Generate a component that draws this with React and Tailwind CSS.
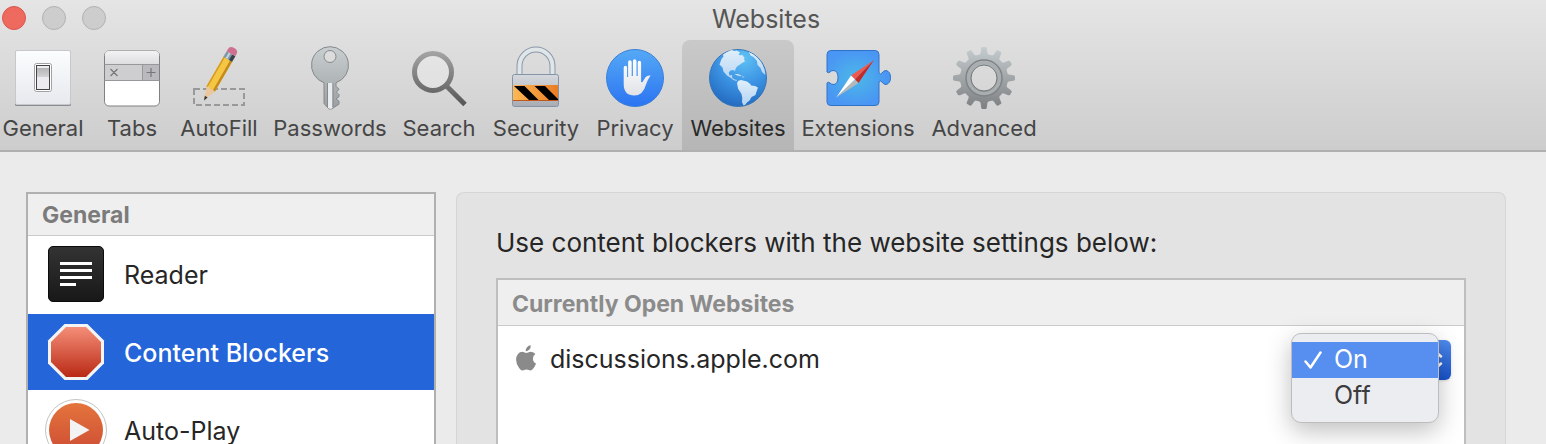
import React, { useState } from 'react';
import clsx from 'clsx';

const toolbarItems = [
  { id: 'general',    label: 'General',    width: 'w-[98px]',  icon: GeneralIcon },
  { id: 'tabs',       label: 'Tabs',       width: 'w-[80px]',  icon: TabsIcon },
  { id: 'autofill',   label: 'AutoFill',   width: 'w-[94px]',  icon: AutoFillIcon },
  { id: 'passwords',  label: 'Passwords',  width: 'w-[128px]', icon: PasswordsIcon },
  { id: 'search',     label: 'Search',     width: 'w-[90px]',  icon: SearchIcon },
  { id: 'security',   label: 'Security',   width: 'w-[104px]', icon: SecurityIcon },
  { id: 'privacy',    label: 'Privacy',    width: 'w-[94px]',  icon: PrivacyIcon },
  { id: 'websites',   label: 'Websites',   width: 'w-[112px]', icon: WebsitesIcon },
  { id: 'extensions', label: 'Extensions', width: 'w-[128px]', icon: ExtensionsIcon },
  { id: 'advanced',   label: 'Advanced',   width: 'w-[124px]', icon: AdvancedIcon },
];

const sections = [
  { id: 'reader',   label: 'Reader',           icon: ReaderIcon },
  { id: 'blockers', label: 'Content Blockers', icon: StopIcon },
  { id: 'autoplay', label: 'Auto-Play',        icon: PlayIcon },
];

const options = ['On', 'Off'];

function Gradient({ id, from, to, x2 = 0, y2 = 1 }) {
  return (
    <linearGradient id={id} x1="0" y1="0" x2={x2} y2={y2}>
      <stop offset="0" stopColor={from} />
      <stop offset="1" stopColor={to} />
    </linearGradient>
  );
}

function Icon({ children }) {
  return (
    <svg viewBox="0 0 64 64" className="h-16 w-16 shrink-0 overflow-visible" aria-hidden="true">
      {children}
    </svg>
  );
}

function GeneralIcon() {
  return (
    <Icon>
      <defs>
        <Gradient id="plate" from="#fcfdfe" to="#e8e9ee" />
        <Gradient id="knob" from="#b4b4b6" to="#d2d2d4" />
      </defs>
      <rect x="4" y="5" width="56" height="55" rx="1.5" fill="#8b8d92" />
      <rect x="4.5" y="4.5" width="55" height="54" rx="1.5" fill="url(#plate)" stroke="#c6c8cc" />
      <rect x="23.5" y="17.5" width="17" height="28" rx="2" fill="#fff" stroke="#a2a2a4" />
      <rect x="25.5" y="19.5" width="13" height="24" fill="#ececf0" stroke="#444" />
      <rect x="26" y="22" width="12" height="9" fill="url(#knob)" />
    </Icon>
  );
}

function TabsIcon() {
  return (
    <Icon>
      <defs>
        <Gradient id="tabTop" from="#f2f1f3" to="#dddcde" />
      </defs>
      <rect x="4.5" y="5" width="55" height="55" rx="4.5" fill="#fff" stroke="#808080" />
      <path d="M5 18.500V9q0-4 4-4h46q4 0 4 4v9.500z" fill="url(#tabTop)" />
      <rect x="5" y="18.500" width="54" height="16" fill="#cecdd0" />
      <rect x="42" y="18.500" width="17" height="16" fill="#bab9bd" />
      <path d="M4.500 18.500h55M4.500 34.500h55M42.500 18.500v16" stroke="#98979b" fill="none" />
      <path d="M10.500 23l7 7m0-7l-7 7M46.500 26.500h9M51 22v9" stroke="#77767a" strokeWidth="1.200" fill="none" />
    </Icon>
  );
}

function AutoFillIcon() {
  return (
    <Icon>
      <rect x="7" y="43" width="50" height="16" fill="none" stroke="#999" strokeWidth="2" strokeDasharray="6 3" />
      <g transform="translate(17 54.500) rotate(30)">
        <path d="M0 0L-5-14H5z" fill="#eac79c" />
        <path d="M0 0l-1.600-4.500h3.200z" fill="#333" />
        <path d="M-5-13V-48H5v35l-2-1.500-3 1.500-3-1.500z" fill="#f5c642" />
        <path d="M2.500-14V-48H5v35z" fill="#c48a1c" />
        <path d="M-5-13V-48h1.500v34z" fill="#d79a22" />
        <rect x="-5" y="-54" width="10" height="6.500" fill="#7e96a5" />
        <rect x="-2.500" y="-54" width="2" height="6.500" fill="#c5d3dc" />
        <rect x="1.500" y="-54" width="3.500" height="6.500" fill="#39424a" />
        <path d="M-5-54v-2.500q0-4 5-4t5 4v2.500z" fill="#cf7091" />
      </g>
    </Icon>
  );
}

function PasswordsIcon() {
  return (
    <Icon>
      <defs>
        <Gradient id="key" from="#c9cfd1" to="#9b9fa1" />
      </defs>
      <path
        fillRule="evenodd"
        d="M32 .700a18.500 18.500 0 0 1 6 36v3.500l3 3-2.500 3 2.500 2.500v2l-3 2 3 2.500v3L33.500 63h-2.500L26 57.500V36.700A18.500 18.500 0 0 1 32 .700zM32 4.500a6 6 0 1 0 0 12 6 6 0 0 0 0-12z"
        fill="url(#key)"
        stroke="#85898b"
      />
      <path d="M30 37h4.500v25l-2 1-2.500-1z" fill="#e9ecee" />
      <path d="M29.500 37v24M35 37v24" stroke="#85898b" />
    </Icon>
  );
}

function SearchIcon() {
  return (
    <Icon>
      <defs>
        <linearGradient id="lens" gradientUnits="userSpaceOnUse" x1="0" y1="5" x2="0" y2="60">
          <stop offset="0" stopColor="#a5a5a5" />
          <stop offset="1" stopColor="#555" />
        </linearGradient>
      </defs>
      <circle cx="26" cy="26" r="18.500" fill="#fff" fillOpacity=".25" stroke="url(#lens)" strokeWidth="5" />
      <path d="M39 39.500L58 58.500" stroke="url(#lens)" strokeWidth="5" />
    </Icon>
  );
}

function SecurityIcon() {
  return (
    <Icon>
      <defs>
        <Gradient id="lock" from="#d5d9dd" to="#a9adb3" />
        <Gradient id="band" from="#fcb955" to="#e97c24" x2={1} y2={0} />
        <clipPath id="bandClip">
          <rect x="9" y="40" width="45" height="14" />
        </clipPath>
      </defs>
      <path d="M15.500 29V20a16.500 16.500 0 0 1 33 0v9" fill="none" stroke="#8b98a8" strokeWidth="6" />
      <path d="M15.500 29V20a16.500 16.500 0 0 1 33 0v9" fill="none" stroke="#dfe6e9" strokeWidth="4" />
      <rect x="8.500" y="28.500" width="46" height="32" rx="2" fill="url(#lock)" stroke="#8693a7" />
      <rect x="9" y="39" width="45" height="15" fill="url(#band)" />
      <path d="M9 54.500h45" stroke="#c2571c" />
      <path d="M10 40h10.500l14 14H25zM30.500 40h10.500l14 14H45z" fill="#000" clipPath="url(#bandClip)" />
    </Icon>
  );
}

function PrivacyIcon() {
  return (
    <Icon>
      <defs>
        <Gradient id="privacy" from="#55a9f5" to="#2b74f2" />
        <Gradient id="hand" from="#fff" to="#e0e2e6" />
      </defs>
      <circle cx="32" cy="32" r="28.500" fill="url(#privacy)" stroke="#3c80d8" />
      <path
        d="M20.700 21.500a1.700 1.700 0 0 1 3.400 0V31h1V16a1.800 1.800 0 0 1 3.600 0v14h1.200V15a1.800 1.800 0 0 1 3.600 0v15h1.200V16.500a1.700 1.700 0 0 1 3.400 0V36l1.200.300 3.200-5q2-2.300 5-1.800-2.500 3.500-4.500 9Q40 49.500 31.500 49.500 20.700 49.500 20.700 38z"
        fill="url(#hand)"
      />
    </Icon>
  );
}

function WebsitesIcon() {
  return (
    <Icon>
      <defs>
        <radialGradient id="ocean" cx=".6" cy=".15" r=".9">
          <stop offset="0" stopColor="#5fc2f5" />
          <stop offset=".5" stopColor="#3d94e4" />
          <stop offset="1" stopColor="#2168bd" />
        </radialGradient>
        <Gradient id="land" from="#e0effa" to="#b5d3f3" />
      </defs>
      <circle cx="32" cy="32" r="28.500" fill="url(#ocean)" stroke="#3876b8" />
      <g fill="url(#land)">
        <path d="M15.500 13l2-2.500L17 8.500l4-2.500 4.500-2 3 1 2-.500 3.500 2-1.500 2 2.500 1 1-1 2.500 3.500-.500 1.500 1 2-3 1.500-2 1.500-3 2-1.500 2.500-.700 2.500-1-1.500-3.300.500-1.700 2 .7 3 2.500-.500.300 3 2.500 1.500 2.200.500-.500 1-3-1-2.500-2-4-2.500-3.500-4-1-4-3-3z" />
        <path d="M28.500 28.500l3-.500 4 1.500-.5.700-3.500-.700zM36 30.500l2.500.200-.5.800-2-.200z" />
        <path d="M31 36.700l1.500-2L35 34l6 1.500 3.300 2.500.7 1.500 4 .500 3 1.500-2 5.500-.500 2-4 2-2 3.500-2.500 2-2 2.500-1.700.300-1.300-3.300.300-4-.800-4-3.500-5.500z" />
        <path d="M43 6q9 4 13.500 12.500 3 6 2.800 10.500l-3.300-3-1.500-4-3-3-.500-4-3.500-4-3-1.500z" />
      </g>
    </Icon>
  );
}

function ExtensionsIcon() {
  return (
    <Icon>
      <defs>
        <radialGradient id="puzzle" cx=".45" cy=".5" r=".5">
          <stop offset="0" stopColor="#4bb9e6" />
          <stop offset="1" stopColor="#4a96f4" />
        </radialGradient>
      </defs>
      <path
        d="M5 4.500h44q4 0 4 4V27q1.500 2 3 0 1.500-2.500 4-2.500 4.500 1 4.500 7t-4.500 7q-2.500 0-4-2.500-1.500-2-3 0v20q0 3.500-4 3.500H5q-4 0-4-3.500V37q1.500-1.500 3 0 1 1.500 4 1.500 4-1 4-7t-4-7q-3 0-4 1.500-1.500 1.500-3 0V8.500q0-4 4-4z"
        fill="url(#puzzle)"
        stroke="#2f73c8"
      />
      <path d="M48 14L25 29.500l4 4z" fill="#ee5a50" />
      <path d="M48 14L32.500 37l-3.500-3.500z" fill="#c42b27" />
      <path d="M10.300 51.500L25 29.500l4 4z" fill="#fff" />
      <path d="M10.300 51.500L32.500 37l-3.500-3.500z" fill="#b5b8bb" />
    </Icon>
  );
}

const teeth = Array.from({ length: 12 }, (_, i) => i * 30);

function AdvancedIcon() {
  return (
    <Icon>
      <defs>
        <linearGradient id="gear" gradientUnits="userSpaceOnUse" x1="0" y1="0" x2="0" y2="64">
          <stop offset="0" stopColor="#c6ced1" />
          <stop offset="1" stopColor="#7c7e80" />
        </linearGradient>
        <mask id="gearMask">
          <g fill="#fff">
            <circle cx="32" cy="32" r="24" />
            {teeth.map((angle) => (
              <path
                key={angle}
                d="M26 10q2.200-1 2.600-3l.6-4.500q.3-1.500 1.300-1.500h3q1 0 1.300 1.500l.6 4.500q.4 2 2.600 3z"
                transform={`rotate(${angle} 32 32)`}
              />
            ))}
          </g>
          <circle cx="32" cy="32" r="13" fill="#000" />
        </mask>
      </defs>
      <rect width="64" height="64" fill="url(#gear)" mask="url(#gearMask)" />
      <circle cx="32" cy="32" r="18" fill="none" stroke="#808486" strokeWidth="1.500" />
      <circle cx="32" cy="32" r="15.500" fill="none" stroke="#a9aeb0" strokeWidth="3" />
      <circle cx="32" cy="32" r="13" fill="none" stroke="#74787a" />
    </Icon>
  );
}

function ReaderIcon() {
  return (
    <Icon>
      <defs>
        <Gradient id="reader" from="#333" to="#181818" />
      </defs>
      <rect x="4.500" y="4.500" width="55" height="55" rx="4.500" fill="url(#reader)" stroke="#0c0c0c" />
      <path d="M16 21.500h32M16 28.500h32M16 35.500h32M16 42.500h16" stroke="#fff" strokeWidth="3" />
    </Icon>
  );
}

function StopIcon() {
  return (
    <Icon>
      <defs>
        <Gradient id="stop" from="#f58e78" to="#b92a15" />
      </defs>
      <path d="M20.500 4h23L60 20.500v23L43.500 60h-23L4 43.500v-23z" fill="#f4f4f4" />
      <path d="M22 7h20l15 15v20L42 57H22L7 42V22z" fill="url(#stop)" />
    </Icon>
  );
}

function PlayIcon() {
  return (
    <Icon>
      <defs>
        <Gradient id="play" from="#e4743c" to="#cc4a34" />
      </defs>
      <circle cx="32" cy="32" r="30.500" fill="#fff" stroke="#c4c4c4" />
      <circle cx="32" cy="32" r="27" fill="url(#play)" />
      <path d="M26 21l19.500 11L26 43z" fill="#f3f3f3" />
    </Icon>
  );
}

function AppleLogo() {
  return (
    <svg viewBox="0 0 20 26" className="mb-1 h-[26px] w-5" fill="#8a8a8a" aria-hidden="true">
      <path d="M14.700.300q.3 2.500-1.300 4.300-1.500 1.700-3.700 1.600-.2-2.300 1.300-4Q12.500.500 14.700.300z" />
      <path d="M10.300 8C11.500 8 12.800 6.600 15 6.700q2.900.200 4.400 2.400-2.600 1.700-2.500 4.600.1 3.400 3.100 4.700-.8 2.500-2.300 4.700-1.500 2.300-3.200 2.400c-1.500 0-2-.9-4-.9s-2.500.9-3.900.9q-1.700 0-3.500-2.500Q.1 19 .1 14.700.200 11 2 8.900 3.700 6.800 6.200 6.700C8 6.700 9.300 8 10.300 8z" />
    </svg>
  );
}

function WindowButtons() {
  return (
    <div className="flex gap-4 pl-0.5">
      <button aria-label="Close" className="h-6 w-6 rounded-full border border-[#d9564c] bg-[#ee6a5f]" />
      <button aria-label="Minimize" className="h-6 w-6 rounded-full border border-[#b2b2b2] bg-[#cdcdcd]" />
      <button aria-label="Zoom" className="h-6 w-6 rounded-full border border-[#b2b2b2] bg-[#cdcdcd]" />
    </div>
  );
}

function SitePopup() {
  const [value, setValue] = useState('On');

  return (
    <div className="relative flex h-10 w-40 justify-end">
      <button
        aria-label="Content blockers for discussions.apple.com"
        aria-haspopup="menu"
        aria-expanded="true"
        className="flex w-8 items-center justify-center rounded-md bg-linear-to-b from-[#4f8bee] to-[#1853cb] shadow-sm"
      >
        <svg viewBox="0 0 16 20" className="h-5 w-4" fill="none" stroke="#fff" strokeWidth="2.500" strokeLinecap="round" aria-hidden="true">
          <path d="M2 6.500L8 1l6 5.500M2 13.500L8 19l6-5.500" />
        </svg>
      </button>
      <div
        role="menu"
        className="absolute -top-[7px] right-3 w-[148px] overflow-hidden rounded-[10px] border border-[#bdbdbf] bg-[#ecedf0] py-2 shadow-[0_8px_24px_rgba(0,0,0,0.25)]"
      >
        {options.map((option) => (
          <button
            key={option}
            role="menuitemradio"
            aria-checked={value === option}
            onClick={() => setValue(option)}
            className={clsx(
              'flex h-9 w-full items-center gap-3 pl-3 text-[25px]',
              value === option ? 'bg-[#568ff0] text-white' : 'text-[#3c3c3e]',
            )}
          >
            <svg viewBox="0 0 18 18" className="h-[18px] w-[18px]" fill="none" aria-hidden="true">
              {value === option && (
                <path d="M1.500 10.500l5 6L16.500 1.500" stroke="#fff" strokeWidth="2.500" strokeLinecap="round" strokeLinejoin="round" />
              )}
            </svg>
            <span>{option}</span>
          </button>
        ))}
      </div>
    </div>
  );
}

export default function App() {
  const [tab, setTab] = useState('websites');
  const [section, setSection] = useState('blockers');

  return (
    <div className="flex h-screen flex-col overflow-hidden bg-[#ebebeb] font-['Inter','Liberation_Sans',sans-serif] text-[#262626]">
      {/* Title bar and toolbar */}
      <header className="shrink-0 border-b-2 border-[#b0b0b0] bg-linear-to-b from-[#e5e5e5] to-[#cdcdcd]">
        <div className="grid h-10 grid-cols-[1fr_auto_1fr] pr-3.5">
          <div className="pt-1.5">
            <WindowButtons />
          </div>
          <h1 className="pt-1 text-[25px] leading-[30px] text-[#555]">Websites</h1>
        </div>
        <nav className="-ml-1.5 flex">
          {toolbarItems.map(({ id, label, width, icon: ItemIcon }) => (
            <button
              key={id}
              onClick={() => setTab(id)}
              className={clsx(
                'flex h-[110px] shrink-0 flex-col items-center rounded-t-lg pt-1.5',
                width,
                tab === id ? 'bg-linear-to-b from-[#c9c9c9] to-[#b6b6b6] text-[#2a2a2a]' : 'text-[#464646]',
              )}
            >
              <ItemIcon />
              <span className="pt-1 text-[22px] leading-7">{label}</span>
            </button>
          ))}
        </nav>
      </header>

      <main className="flex min-h-0 flex-1 gap-5 pl-[26px] pr-10 pt-10">
        {/* Settings list */}
        <aside className="w-[410px] shrink-0 border-2 border-b-0 border-[#b0b0b0] bg-white">
          <h2 className="h-[42px] border-b border-[#cacaca] bg-[#efefef] pl-3.5 text-[23px] font-bold leading-[42px] text-[#7b7b7b]">
            General
          </h2>
          <div className="flex flex-col gap-0.5">
            {sections.map(({ id, label, icon: SectionIcon }) => (
              <button
                key={id}
                onClick={() => setSection(id)}
                className={clsx(
                  'flex h-[76px] items-center gap-4 pl-4 text-left text-[25px]',
                  section === id && 'bg-[#2465da] font-medium text-white',
                )}
              >
                <SectionIcon />
                <span className="pt-1">{label}</span>
              </button>
            ))}
          </div>
        </aside>

        {/* Site settings */}
        <section className="flex min-w-0 flex-1 flex-col rounded-t-lg border border-b-0 border-[#d5d5d5] bg-[#e3e3e3] px-[39px] pt-[34px]">
          <p className="text-[26px] leading-8">Use content blockers with the website settings below:</p>
          <div className="mt-[19px] flex-1 border-2 border-b-0 border-[#bebebe] bg-white">
            <h3 className="h-[46px] border-b border-[#cacaca] bg-[#efefef] pl-3.5 pt-0.5 text-[23px] font-bold leading-[44px] text-[#8b8b8b]">
              Currently Open Websites
            </h3>
            <div className="flex h-[68px] items-center pl-[18px] pr-[13px]">
              <AppleLogo />
              <span className="flex-1 pl-3.5 text-[25px]">discussions.apple.com</span>
              <SitePopup />
            </div>
          </div>
        </section>
      </main>
    </div>
  );
}
